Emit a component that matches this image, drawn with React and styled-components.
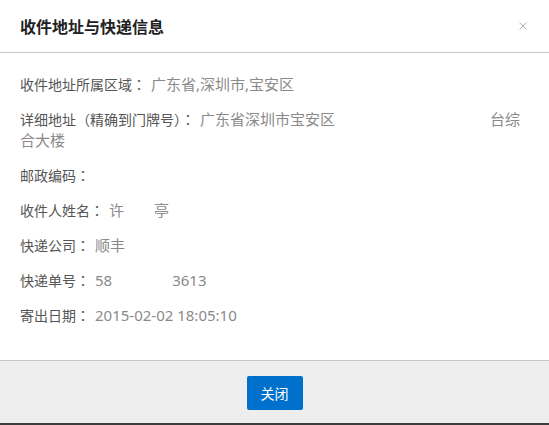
import React from 'react'
import styled, { createGlobalStyle } from 'styled-components'

const GlobalStyle = createGlobalStyle`
  html, body {
    margin: 0;
    padding: 0;
    background: #3c3c3c;
  }
  body {
    font-family: "Noto Sans", "Noto Sans CJK SC", sans-serif;
  }
`

const Dialog = styled.div`
  display: flex;
  flex-direction: column;
  width: 549px;
  height: 423px;
  background: #fff;
`

const Header = styled.div`
  display: flex;
  align-items: center;
  justify-content: space-between;
  height: 52px;
  padding: 0 20px;
  border-bottom: 1px solid #c8c8c8;
`

const Title = styled.h3`
  margin: 0;
  font-size: 16px;
  font-weight: bold;
  color: #222;
`

const Close = styled.button`
  display: flex;
  align-items: center;
  justify-content: center;
  width: 14px;
  height: 14px;
  margin-right: -1px;
  padding: 0;
  border: 0;
  background: none;
  cursor: pointer;
`

const Body = styled.div`
  flex: 1;
  padding: 21px 20px 0;
`

const Row = styled.div`
  font-size: 14px;
  line-height: 21px;
  color: #555;
  & + & {
    margin-top: 14px;
  }
`

// centred full-width punctuation, as in the original rendering
const Punct = styled.span`
  font-family: "Noto Sans CJK TC", sans-serif;
`

const Value = styled.span`
  margin-left: 5px;
  font-size: 15px;
  color: #8a8a8a;
`

const Mask = styled.span`
  display: inline-block;
  width: ${props => props.w}px;
`

const Footer = styled.div`
  display: flex;
  justify-content: center;
  height: 63px;
  padding-top: 15px;
  box-sizing: border-box;
  background: #eee;
  border-top: 1px solid #c8c8c8;
`

const Button = styled.button`
  width: 56px;
  height: 34px;
  border: 0;
  border-radius: 2px;
  background: #0070cd;
  color: #fff;
  font-family: inherit;
  font-size: 14px;
  cursor: pointer;
`

const Colon = () => <Punct>：</Punct>

const App = () => (
  <>
    <GlobalStyle />
    <Dialog>
      <Header>
        <Title>收件地址与快递信息</Title>
        <Close aria-label="关闭">
          <svg width="8" height="8" viewBox="0 0 8 8">
            <path d="M0.5 0.5L7.5 7.5M7.5 0.5L0.5 7.5" stroke="#b4b4b4" strokeWidth="1" />
          </svg>
        </Close>
      </Header>
      <Body>
        <Row>
          收件地址所属区域<Colon /><Value>广东省,深圳市,宝安区</Value>
        </Row>
        <Row>
          详细地址<Punct>（</Punct>精确到门牌号<Punct>）</Punct><Colon />
          <Value>广东省深圳市宝安区<Mask w={155} />台综合大楼</Value>
        </Row>
        <Row>邮政编码<Colon /></Row>
        <Row>
          收件人姓名<Colon /><Value>许<Mask w={30} />亭</Value>
        </Row>
        <Row>
          快递公司<Colon /><Value>顺丰</Value>
        </Row>
        <Row>
          快递单号<Colon /><Value>58<Mask w={60} />3613</Value>
        </Row>
        <Row>
          寄出日期<Colon /><Value>2015-02-02 18:05:10</Value>
        </Row>
      </Body>
      <Footer>
        <Button>关闭</Button>
      </Footer>
    </Dialog>
  </>
)

export default App
